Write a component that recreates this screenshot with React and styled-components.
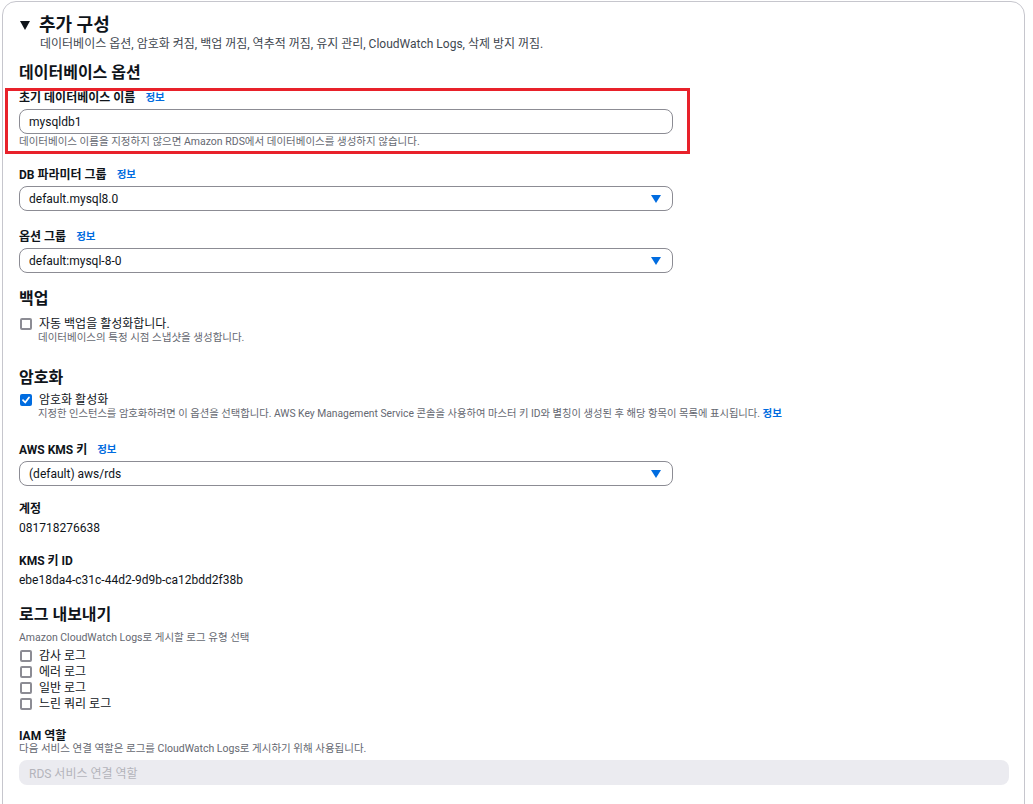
import React from "react";
import styled, { createGlobalStyle } from "styled-components";

const Global = createGlobalStyle`
  html, body { margin: 0; padding: 0; background: #ffffff; }
  body {
    font-family: Roboto, "Noto Sans CJK KR", sans-serif;
    color: #0f141a;
    overflow: hidden;
  }
`;

const Card = styled.section`
  margin: 1px 8px 0 2px;
  height: 840px;
  border: 1px solid #c6c6cd;
  border-radius: 14px;
  padding: 12px 15px 0 16px;
  box-sizing: border-box;
`;

const Header = styled.div`
  display: flex;
  align-items: center;
  gap: 9px;
  height: 22px;
  padding-left: 1px;
`;

const Caret = styled.span`
  width: 0;
  height: 0;
  border-left: 5px solid transparent;
  border-right: 5px solid transparent;
  border-top: 9px solid #0f141a;
  margin-top: 1px;
`;

const Title = styled.h2`
  margin: 0;
  font-size: 18px;
  line-height: 22px;
  font-weight: 700;
`;

const Subtitle = styled.div`
  margin: 0 0 0 21px;
  font-size: 12px;
  line-height: 16px;
  color: #414750;
`;

const Heading = styled.h3`
  margin: ${(p) => p.$mt}px 0 0;
  font-size: 16px;
  line-height: 20px;
  font-weight: 700;
`;

const Highlight = styled.div`
  margin: 5px 0 0 -14px;
  width: 685px;
  box-sizing: border-box;
  border: 3px solid #e8212a;
  padding: 1px 0 2px 11px;
`;

const Label = styled.div`
  margin-top: ${(p) => p.$mt || 0}px;
  display: flex;
  align-items: center;
  gap: 10px;
  font-size: 12px;
  line-height: ${(p) => p.$lh || 14}px;
  font-weight: 700;
`;

const Info = styled.a`
  color: #006ce0;
  font-weight: 700;
  font-size: 10.5px;
  text-decoration: none;
`;

const TextInput = styled.div`
  margin-top: 5px;
  width: 654px;
  height: 25px;
  box-sizing: border-box;
  border: 1px solid #8c8c94;
  border-radius: 8px;
  padding: 0 9px;
  display: flex;
  align-items: center;
  font-size: 12px;
`;

const Select = styled(TextInput)`
  margin-top: 4px;
  justify-content: space-between;
  padding: 0 9px 0 9px;
`;

const Arrow = styled.span`
  width: 0;
  height: 0;
  border-left: 5px solid transparent;
  border-right: 5px solid transparent;
  border-top: 8px solid #006ce0;
  margin-right: 2px;
`;

const Help = styled.div`
  margin-top: ${(p) => p.$mt || 0}px;
  padding-left: ${(p) => p.$indent || 0}px;
  font-size: ${(p) => p.$fs || 10.5}px;
  line-height: ${(p) => p.$lh || 14}px;
  color: #656871;
`;

const Value = styled.div`
  margin-top: 5px;
  font-size: 12px;
  line-height: 14px;
`;

const CheckRow = styled.label`
  margin-top: ${(p) => p.$mt || 0}px;
  display: flex;
  align-items: center;
  gap: 7px;
  font-size: 12px;
  line-height: ${(p) => p.$lh || 14}px;
  padding-left: 1px;
`;

const Box = styled.span`
  width: 12px;
  height: 12px;
  box-sizing: border-box;
  border-radius: 2px;
  border: ${(p) => (p.$checked ? "none" : "2px solid #8c8c94")};
  background: ${(p) => (p.$checked ? "#006ce0" : "#fff")};
  display: inline-flex;
  align-items: center;
  justify-content: center;
  flex: none;
`;

const LogList = styled.div`
  margin-top: 3px;
  display: flex;
  flex-direction: column;
`;

const Disabled = styled.div`
  margin-top: 5px;
  height: 25px;
  border-radius: 8px;
  background: #ebebf0;
  color: #b4b4bb;
  font-size: 12px;
  display: flex;
  align-items: center;
  padding: 0 10px;
`;

const Check = ({ checked }) => (
  <Box $checked={checked}>
    {checked && (
      <svg width="10" height="10" viewBox="0 0 10 10">
        <path d="M2 5.2 L4.2 7.5 L8 2.5" stroke="#fff" strokeWidth="1.8" fill="none" strokeLinecap="round" strokeLinejoin="round" />
      </svg>
    )}
  </Box>
);

export default function App() {
  return (
    <>
      <Global />
      <Card>
        <Header>
          <Caret />
          <Title>추가 구성</Title>
        </Header>
        <Subtitle>
          데이터베이스 옵션, 암호화 켜짐, 백업 꺼짐, 역추적 꺼짐, 유지 관리, CloudWatch Logs, 삭제 방지 꺼짐.
        </Subtitle>

        <Heading $mt={11}>데이터베이스 옵션</Heading>
        <Highlight>
          <Label $lh={12}>
            초기 데이터베이스 이름 <Info>정보</Info>
          </Label>
          <TextInput>mysqldb1</TextInput>
          <Help $mt={1}>
            데이터베이스 이름을 지정하지 않으면 Amazon RDS에서 데이터베이스를 생성하지 않습니다.
          </Help>
        </Highlight>

        <Label $mt={14}>
          DB 파라미터 그룹 <Info>정보</Info>
        </Label>
        <Select>
          default.mysql8.0
          <Arrow />
        </Select>

        <Label $mt={19}>
          옵션 그룹 <Info>정보</Info>
        </Label>
        <Select>
          default:mysql-8-0
          <Arrow />
        </Select>

        <Heading $mt={16}>백업</Heading>
        <CheckRow $mt={8}>
          <Check />
          자동 백업을 활성화합니다.
        </CheckRow>
        <Help $indent={19}>데이터베이스의 특정 시점 스냅샷을 생성합니다.</Help>

        <Heading $mt={23}>암호화</Heading>
        <CheckRow $mt={5}>
          <Check checked />
          암호화 활성화
        </CheckRow>
        <Help $indent={19} $fs={10.3}>
          지정한 인스턴스를 암호화하려면 이 옵션을 선택합니다. AWS Key Management Service 콘솔을 사용하여 마스터 키 ID와 별칭이 생성된 후 해당 항목이 목록에 표시됩니다.{" "}
          <Info>정보</Info>
        </Help>

        <Label $mt={22}>
          AWS KMS 키 <Info>정보</Info>
        </Label>
        <Select>
          (default) aws/rds
          <Arrow />
        </Select>

        <Label $mt={16}>계정</Label>
        <Value>081718276638</Value>

        <Label $mt={19}>KMS 키 ID</Label>
        <Value>ebe18da4-c31c-44d2-9d9b-ca12bdd2f38b</Value>

        <Heading $mt={18}>로그 내보내기</Heading>
        <Help $mt={6}>Amazon CloudWatch Logs로 게시할 로그 유형 선택</Help>
        <LogList>
          {["감사 로그", "에러 로그", "일반 로그", "느린 쿼리 로그"].map((t) => (
            <CheckRow key={t} $lh={16}>
              <Check />
              {t}
            </CheckRow>
          ))}
        </LogList>

        <Label $mt={17}>IAM 역할</Label>
        <Help $lh={12}>다음 서비스 연결 역할은 로그를 CloudWatch Logs로 게시하기 위해 사용됩니다.</Help>
        <Disabled>RDS 서비스 연결 역할</Disabled>
      </Card>
    </>
  );
}
